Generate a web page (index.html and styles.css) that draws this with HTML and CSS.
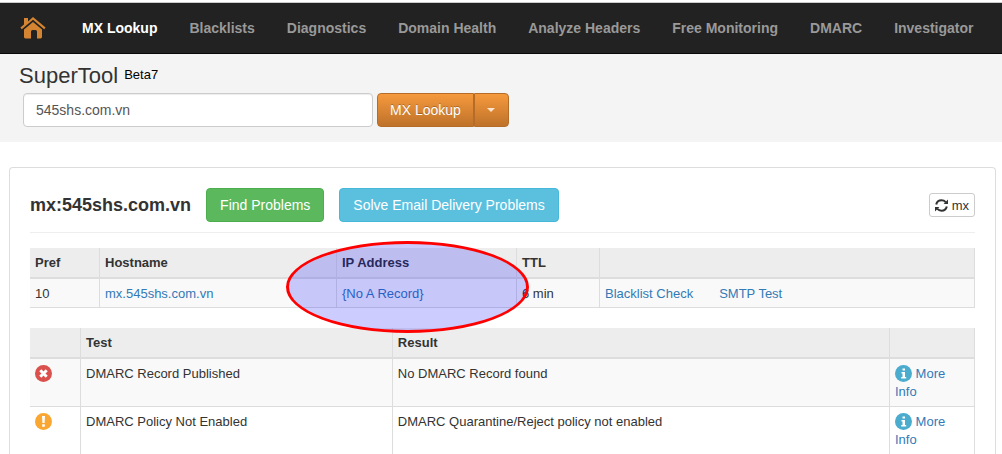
FILE: index.html
```html
<!DOCTYPE html>
<html lang="en">
<head>
  <meta charset="UTF-8">
  <title>SuperTool</title>
  <link rel="stylesheet" href="styles.css">
</head>
<body>

  <!-- Icons used more than once -->
  <svg class="sprite" aria-hidden="true">
    <symbol id="icon-info" viewBox="0 0 17 17">
      <circle cx="8.5" cy="8.5" r="8.5" fill="#4bacce"/>
      <path fill="#fff" d="M7.500 3.500h2.500v2H7.500zM6.500 7H10v5h1.200v1.500H6.200V12h1.300V8.500h-1z"/>
    </symbol>
  </svg>

  <nav class="navbar">
    <a class="home" href="#" aria-label="Home">
      <svg width="26" height="22" viewBox="0 0 26 22">
        <path fill="#d58432" d="M4 1h4v3.400L13 0l12.600 10.600-1.400 1.700L13 2.800 1.800 12.300.4 10.600 4 7.500z"/>
        <path fill="#d58432" d="M13 5l9 7.500V20q0 1.400-1.400 1.400H17V14.500q0-1.500-1.500-1.500h-3q-1.500 0-1.500 1.500v6.900H5.400Q4 21.400 4 20v-7.500z"/>
      </svg>
    </a>
    <a class="active" href="#">MX Lookup</a>
    <a href="#">Blacklists</a>
    <a href="#">Diagnostics</a>
    <a href="#">Domain Health</a>
    <a href="#">Analyze Headers</a>
    <a href="#">Free Monitoring</a>
    <a href="#">DMARC</a>
    <a href="#">Investigator</a>
  </nav>

  <!-- Search -->
  <header class="search">
    <h1>SuperTool <sup>Beta7</sup></h1>
    <form class="search-form">
      <input type="text" name="query" aria-label="Domain" value="545shs.com.vn">
      <div class="btn-group">
        <button class="btn btn-orange" type="submit">MX Lookup</button>
        <button class="btn btn-orange btn-toggle" type="button" aria-label="Choose lookup"><span class="caret"></span></button>
      </div>
    </form>
  </header>

  <!-- Results -->
  <main class="panel">
    <div class="panel-head">
      <h2>mx:545shs.com.vn</h2>
      <button class="btn btn-green" type="button">Find Problems</button>
      <button class="btn btn-blue" type="button">Solve Email Delivery Problems</button>
      <button class="btn-refresh" type="button">
        <svg width="13" height="13" viewBox="0 0 13 13" fill="none" stroke="#333" stroke-width="2">
          <path d="M1.200 5.500C1.800 3 3.900 1.300 6.500 1.300c1.700 0 3.100.6 4.200 1.800M11.800 7.500c-.6 2.500-2.700 4.200-5.300 4.200-1.700 0-3.100-.6-4.200-1.800"/>
          <path fill="#333" stroke="none" d="M13 .6V5H8.600zM0 12.400V8h4.400z"/>
        </svg>
        mx
      </button>
    </div>

    <div class="records">
      <table class="records-table">
        <thead>
          <tr><th class="pref">Pref</th><th class="host">Hostname</th><th class="ip">IP Address</th><th class="ttl">TTL</th><th></th></tr>
        </thead>
        <tbody>
          <tr>
            <td>10</td>
            <td><a href="#">mx.545shs.com.vn</a></td>
            <td><a href="#">{No A Record}</a></td>
            <td>6 min</td>
            <td><div class="actions"><a href="#">Blacklist Check</a><a href="#">SMTP Test</a></div></td>
          </tr>
        </tbody>
      </table>
      <div class="highlight"></div>
    </div>

    <table class="tests-table">
      <thead>
        <tr><th class="status"></th><th class="test">Test</th><th>Result</th><th class="more"></th></tr>
      </thead>
      <tbody>
        <tr>
          <td>
            <svg class="icon" viewBox="0 0 17 17">
              <circle cx="8.5" cy="8.5" r="8.5" fill="#d9504c"/>
              <path stroke="#fff" stroke-width="3" d="M5.3 5.3l6.4 6.4M11.7 5.3l-6.4 6.4"/>
            </svg>
          </td>
          <td>DMARC Record Published</td>
          <td>No DMARC Record found</td>
          <td><a href="#"><svg class="icon"><use href="#icon-info"/></svg> More Info</a></td>
        </tr>
        <tr>
          <td>
            <svg class="icon" viewBox="0 0 17 17">
              <circle cx="8.5" cy="8.5" r="8.5" fill="#faa732"/>
              <path fill="#fff" d="M7 3h3l-.4 7H7.400zM7.200 11.200h2.600v2.600H7.200z"/>
            </svg>
          </td>
          <td>DMARC Policy Not Enabled</td>
          <td>DMARC Quarantine/Reject policy not enabled</td>
          <td><a href="#"><svg class="icon"><use href="#icon-info"/></svg> More Info</a></td>
        </tr>
      </tbody>
    </table>
  </main>

</body>
</html>
```
FILE: styles.css
```css
* { box-sizing: border-box; }
body {
  margin: 0;
  padding-top: 2px;
  font: 13px/18px "Liberation Sans", Arial, sans-serif;
  color: #333;
  background: #fff;
}
a { color: #337ab7; text-decoration: none; }
h1, h2 { margin: 0; }
input, button { font-family: inherit; }
.sprite { position: absolute; width: 0; height: 0; }

/* Navigation */
.navbar {
  display: flex;
  align-items: center;
  gap: 32px;
  height: 52px;
  padding-left: 20px;
  background: #222;
  border-top: 1px solid #ccc;
  border-bottom: 1px solid #080808;
}
.navbar a { color: #999; font-size: 14px; font-weight: bold; white-space: nowrap; }
.navbar a.active { color: #fff; }
.navbar .home { margin-right: 4px; height: 22px; }
.home svg { display: block; }

/* Search */
.search { padding: 8px 19px 15px; background: #f4f4f4; }
.search h1 { font-size: 22px; line-height: 28px; font-weight: normal; }
.search sup { font-size: 13px; line-height: 13px; vertical-align: 4px; color: #000; }
.search-form { display: flex; gap: 4px; margin: 3px 0 0 4px; }
.search-form input {
  width: 350px;
  height: 34px;
  padding: 6px 12px;
  font-size: 14px;
  color: #555;
  border: 1px solid #ccc;
  border-radius: 4px;
  box-shadow: inset 0 1px 1px rgba(0, 0, 0, .075);
}

/* Buttons */
.btn {
  height: 34px;
  padding: 0 13px;
  font-size: 14px;
  color: #fff;
  border: 1px solid transparent;
  border-radius: 4px;
  white-space: nowrap;
}
.btn-group { display: flex; }
.btn-orange {
  padding: 0 12px;
  background: linear-gradient(#f79a3e, #bd7129) border-box;
  border-color: #b56c28;
  text-shadow: 0 -1px 0 rgba(0, 0, 0, .25);
  border-radius: 4px 0 0 4px;
}
.btn-toggle { padding: 0 13px 0 12px; border-radius: 0 4px 4px 0; }
.caret {
  display: block;
  width: 8px;
  border: 4px solid transparent;
  border-top-color: #fce3cb;
  border-bottom: 0;
}
.btn-green { background: #5cb85c; border-color: #4cae4c; }
.btn-blue { background: #5bc0de; border-color: #46b8da; }
.btn-refresh {
  display: flex;
  align-items: center;
  gap: 4px;
  height: 24px;
  margin-left: auto;
  padding: 0 5px;
  font-size: 13px;
  color: #333;
  background: #fff;
  border: 1px solid #ccc;
  border-radius: 3px;
}

/* Results */
.panel {
  margin: 25px 6px 0 9px;
  padding: 20px;
  border: 1px solid #ddd;
  border-bottom: 0;
  border-radius: 4px 4px 0 0;
}
.panel-head {
  display: flex;
  align-items: center;
  gap: 15px;
  padding-bottom: 10px;
  margin-bottom: 15px;
  border-bottom: 1px solid #eee;
}
.panel-head h2 { font-size: 18px; line-height: 20px; }

table { width: 100%; table-layout: fixed; border-collapse: separate; border-spacing: 0; }
th, td {
  padding: 6px 5px 4px;
  text-align: left;
  vertical-align: top;
  border-right: 1px solid #ddd;
  border-bottom: 1px solid #ddd;
}
th { height: 31px; background: #ededed; border-bottom-width: 2px; }
tbody tr:nth-child(odd) { background: #f9f9f9; }

.records { position: relative; margin-bottom: 20px; }
.pref { width: 70px; }
.host { width: 237px; }
.ip { width: 180px; }
.ttl { width: 83px; }
.actions { display: flex; gap: 26px; }

/* Ellipse round the IP address */
.highlight {
  position: absolute;
  top: -7px;
  left: 256px;
  width: 243px;
  height: 92px;
  background: rgba(0, 0, 255, .2);
  border: 3px solid #f00;
  border-radius: 50%;
  pointer-events: none;
}

.tests-table td { height: 48px; }
.status { width: 51px; }
.test { width: 33%; }
.more { width: 85px; }
.icon { width: 17px; height: 17px; vertical-align: -4px; }
```
